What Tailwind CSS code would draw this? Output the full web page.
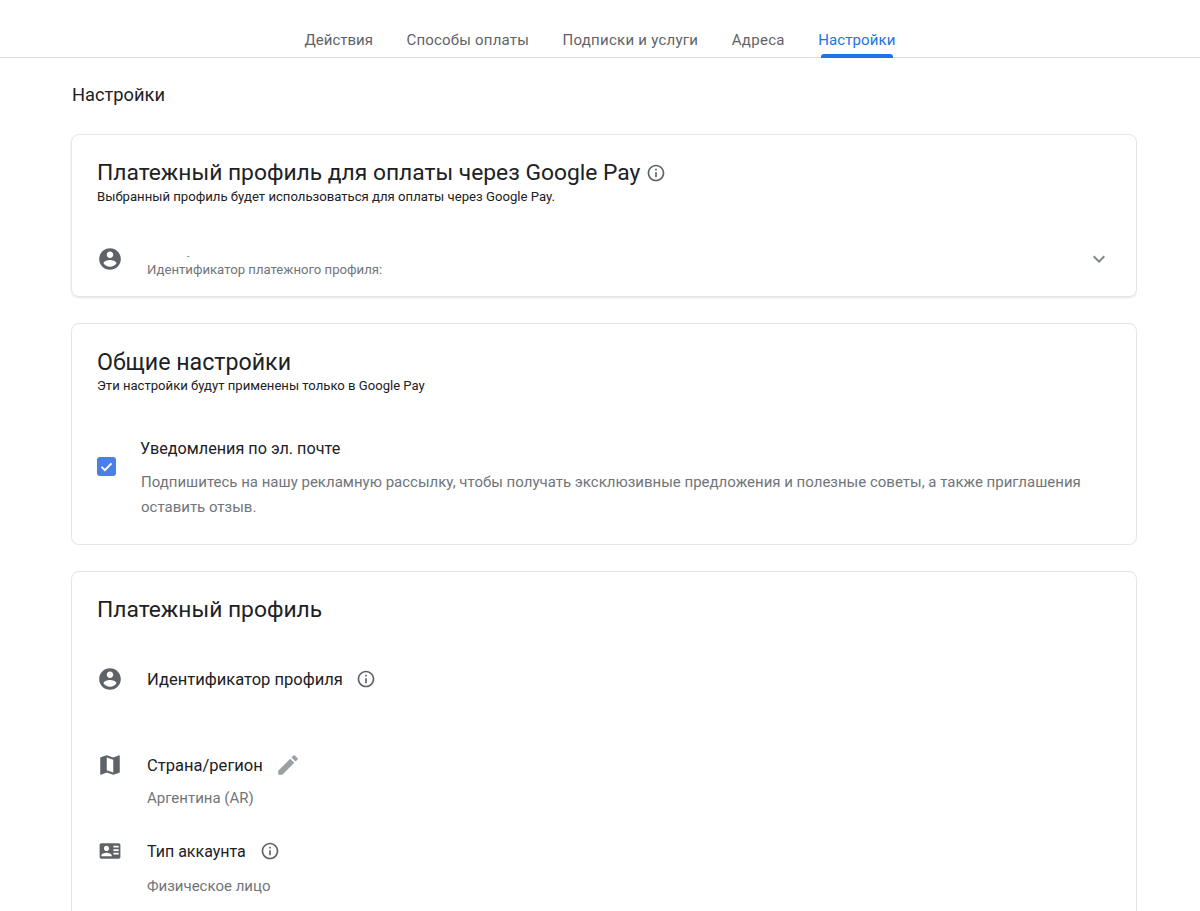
<!doctype html>
<html>
<head>
  <meta charset="UTF-8">
  <script src="https://cdn.jsdelivr.net/npm/@tailwindcss/browser@4"></script>
</head>
<body class="bg-white font-['Roboto',sans-serif] antialiased overflow-hidden h-[911px]">
  <!-- tabs -->
  <nav class="h-[58px] border-b border-[#dadce0] flex justify-center items-end gap-[33.5px] text-[15px] text-[#5f6368]">
    <a class="h-[29px] leading-[24px]">Действия</a>
    <a class="h-[29px] leading-[24px] tracking-[0.2px]">Способы оплаты</a>
    <a class="h-[29px] leading-[24px] tracking-[0.25px]">Подписки и услуги</a>
    <a class="h-[29px] leading-[24px] tracking-[0.3px]">Адреса</a>
    <a class="relative h-[29px] leading-[24px] tracking-[0.1px] text-[#1a73e8]">Настройки
      <span class="absolute left-[3px] right-[2px] bottom-[-1px] h-[4px] rounded-t-[3px] bg-[#1a73e8]"></span>
    </a>
  </nav>

  <main class="pl-[71px] w-[1137px] h-[853px] overflow-hidden">
    <h1 class="pl-px pt-[25px] h-[76px] text-[18.3px] leading-[24px] text-[#202124]">Настройки</h1>

    <section class="h-[163px] rounded-lg border border-[#e4e5e7] shadow-[0_1px_2px_rgba(60,64,67,0.15)] px-[25px] pt-[22px]">
      <div class="flex items-center gap-[6px]">
        <h2 class="text-[22.8px] leading-[32px] text-[#202124]">Платежный профиль для оплаты через Google Pay</h2>
        <svg class="w-[20px] h-[20px] fill-[#5f6368]" viewBox="0 0 24 24"><path d="M11 7h2v2h-2zm0 4h2v6h-2zm1-9C6.48 2 2 6.48 2 12s4.48 10 10 10 10-4.48 10-10S17.52 2 12 2zm0 18c-4.41 0-8-3.59-8-8s3.59-8 8-8 8 3.59 8 8-3.59 8-8 8z"/></svg>
      </div>
      <p class="mt-[-1px] text-[13.15px] leading-[18px] text-[#202124]">Выбранный профиль будет использоваться для оплаты через Google Pay.</p>
      <div class="mt-[41px] flex items-start">
        <svg class="w-[26px] h-[26px] fill-[#5f6368] mt-[-1px]" viewBox="0 0 24 24"><path d="M12 2C6.48 2 2 6.48 2 12s4.48 10 10 10 10-4.48 10-10S17.52 2 12 2zm0 3c1.66 0 3 1.34 3 3s-1.34 3-3 3-3-1.34-3-3 1.34-3 3-3zm0 14.2c-2.5 0-4.71-1.28-6-3.22.03-1.99 4-3.08 6-3.08 1.99 0 5.97 1.09 6 3.08-1.29 1.94-3.5 3.22-6 3.22z"/></svg>
        <div class="ml-[24px] mt-[4px]">
          <div class="h-[10px] pl-[40px] text-[9px] leading-[10px] text-[#5f6368]">-</div>
          <div class="text-[13.15px] leading-[18px] text-[#70757a]">Идентификатор платежного профиля:</div>
        </div>
        <svg class="ml-auto w-[24px] h-[24px] fill-[#80868b]" viewBox="0 0 24 24"><path d="M7.41 8.59 12 13.17l4.59-4.58L18 10l-6 6-6-6z"/></svg>
      </div>
    </section>

    <section class="mt-[26px] h-[222px] rounded-lg border border-[#e4e5e7] px-[25px] pt-[22px]">
      <h2 class="text-[23.2px] leading-[32px] text-[#202124]">Общие настройки</h2>
      <p class="mt-[-1px] text-[13.1px] leading-[18px] text-[#202124]">Эти настройки будут применены только в Google Pay</p>
      <div class="mt-[42px] flex items-start">
        <span class="mt-[20px] w-[19px] h-[19px] rounded-[3px] bg-[#4b7fe8] flex items-center justify-center">
          <svg class="w-[15px] h-[15px] fill-none stroke-white stroke-[3]" viewBox="0 0 24 24"><path d="M4 12.5l5.5 5.5L20 7"/></svg>
        </span>
        <div class="ml-[25px] flex-1">
          <div class="ml-[-1px] text-[16.2px] leading-[24px] text-[#202124]">Уведомления по эл. почте</div>
          <p class="mt-[9px] text-[15px] leading-[25px] text-[#70757a]">Подпишитесь на нашу рекламную рассылку, чтобы получать эксклюзивные предложения и полезные советы, а также приглашения оставить отзыв.</p>
        </div>
      </div>
    </section>

    <section class="mt-[26px] h-[500px] rounded-lg border border-[#e4e5e7] px-[25px] pt-[22px]">
      <h2 class="text-[22.8px] leading-[32px] text-[#202124]">Платежный профиль</h2>

      <div class="mt-[40px] flex items-center h-[26px]">
        <svg class="w-[26px] h-[26px] fill-[#5f6368]" viewBox="0 0 24 24"><path d="M12 2C6.48 2 2 6.48 2 12s4.48 10 10 10 10-4.48 10-10S17.52 2 12 2zm0 3c1.66 0 3 1.34 3 3s-1.34 3-3 3-3-1.34-3-3 1.34-3 3-3zm0 14.2c-2.5 0-4.71-1.28-6-3.22.03-1.99 4-3.08 6-3.08 1.99 0 5.97 1.09 6 3.08-1.29 1.94-3.5 3.22-6 3.22z"/></svg>
        <span class="ml-[24px] mt-[2px] text-[16.55px] text-[#202124]">Идентификатор профиля</span>
        <svg class="ml-[13px] w-[20px] h-[20px] fill-[#5f6368]" viewBox="0 0 24 24"><path d="M11 7h2v2h-2zm0 4h2v6h-2zm1-9C6.48 2 2 6.48 2 12s4.48 10 10 10 10-4.48 10-10S17.52 2 12 2zm0 18c-4.41 0-8-3.59-8-8s3.59-8 8-8 8 3.59 8 8-3.59 8-8 8z"/></svg>
      </div>

      <div class="mt-[60px] flex items-center h-[26px]">
        <svg class="w-[26px] h-[26px] fill-[#5f6368]" viewBox="0 0 24 24"><path d="m20.5 3-.16.03L15 5.1 9 3 3.36 4.9c-.21.07-.36.25-.36.48V20.5c0 .28.22.5.5.5l.16-.03L9 18.9l6 2.1 5.64-1.9c.21-.07.36-.25.36-.48V3.5c0-.28-.22-.5-.5-.5zM15 19l-6-2.11V5l6 2.11V19z"/></svg>
        <span class="ml-[24px] mt-[2px] text-[16.55px] text-[#202124]">Страна/регион</span>
        <svg class="ml-[12px] w-[26px] h-[26px] fill-[#9aa0a6]" viewBox="0 0 24 24"><path d="M3 17.25V21h3.75L17.81 9.94l-3.75-3.75L3 17.25zM20.71 7.04a.996.996 0 0 0 0-1.41l-2.34-2.34a.996.996 0 0 0-1.41 0l-1.83 1.83 3.75 3.75 1.83-1.83z"/></svg>
      </div>
      <div class="mt-[8px] ml-[50px] text-[15px] leading-[24px] text-[#70757a]">Аргентина (AR)</div>

      <div class="mt-[28px] flex items-center h-[26px]">
        <svg class="w-[26px] h-[26px] fill-[#5f6368]" viewBox="0 0 24 24"><path d="M22 3H2C.9 3 0 3.9 0 5v14c0 1.1.9 2 2 2h20c1.1 0 2-.9 2-2V5c0-1.1-.9-2-2-2zM8 6c1.66 0 3 1.34 3 3s-1.34 3-3 3-3-1.34-3-3 1.34-3 3-3zm6 12H2v-1c0-2 4-3.1 6-3.1s6 1.1 6 3.1v1zm8-6h-6v-2h6v2zm0-4h-6V6h6v2zm0 8h-6v-2h6v2z" transform="translate(2.4 2.4) scale(.8)"/></svg>
        <span class="ml-[24px] mt-[2px] text-[16px] text-[#202124]">Тип аккаунта</span>
        <svg class="ml-[14px] w-[20px] h-[20px] fill-[#5f6368]" viewBox="0 0 24 24"><path d="M11 7h2v2h-2zm0 4h2v6h-2zm1-9C6.48 2 2 6.48 2 12s4.48 10 10 10 10-4.48 10-10S17.52 2 12 2zm0 18c-4.41 0-8-3.59-8-8s3.59-8 8-8 8 3.59 8 8-3.59 8-8 8z"/></svg>
      </div>
      <div class="mt-[10px] ml-[50px] text-[15px] leading-[24px] text-[#70757a]">Физическое лицо</div>
    </section>
  </main>
</body>
</html>
